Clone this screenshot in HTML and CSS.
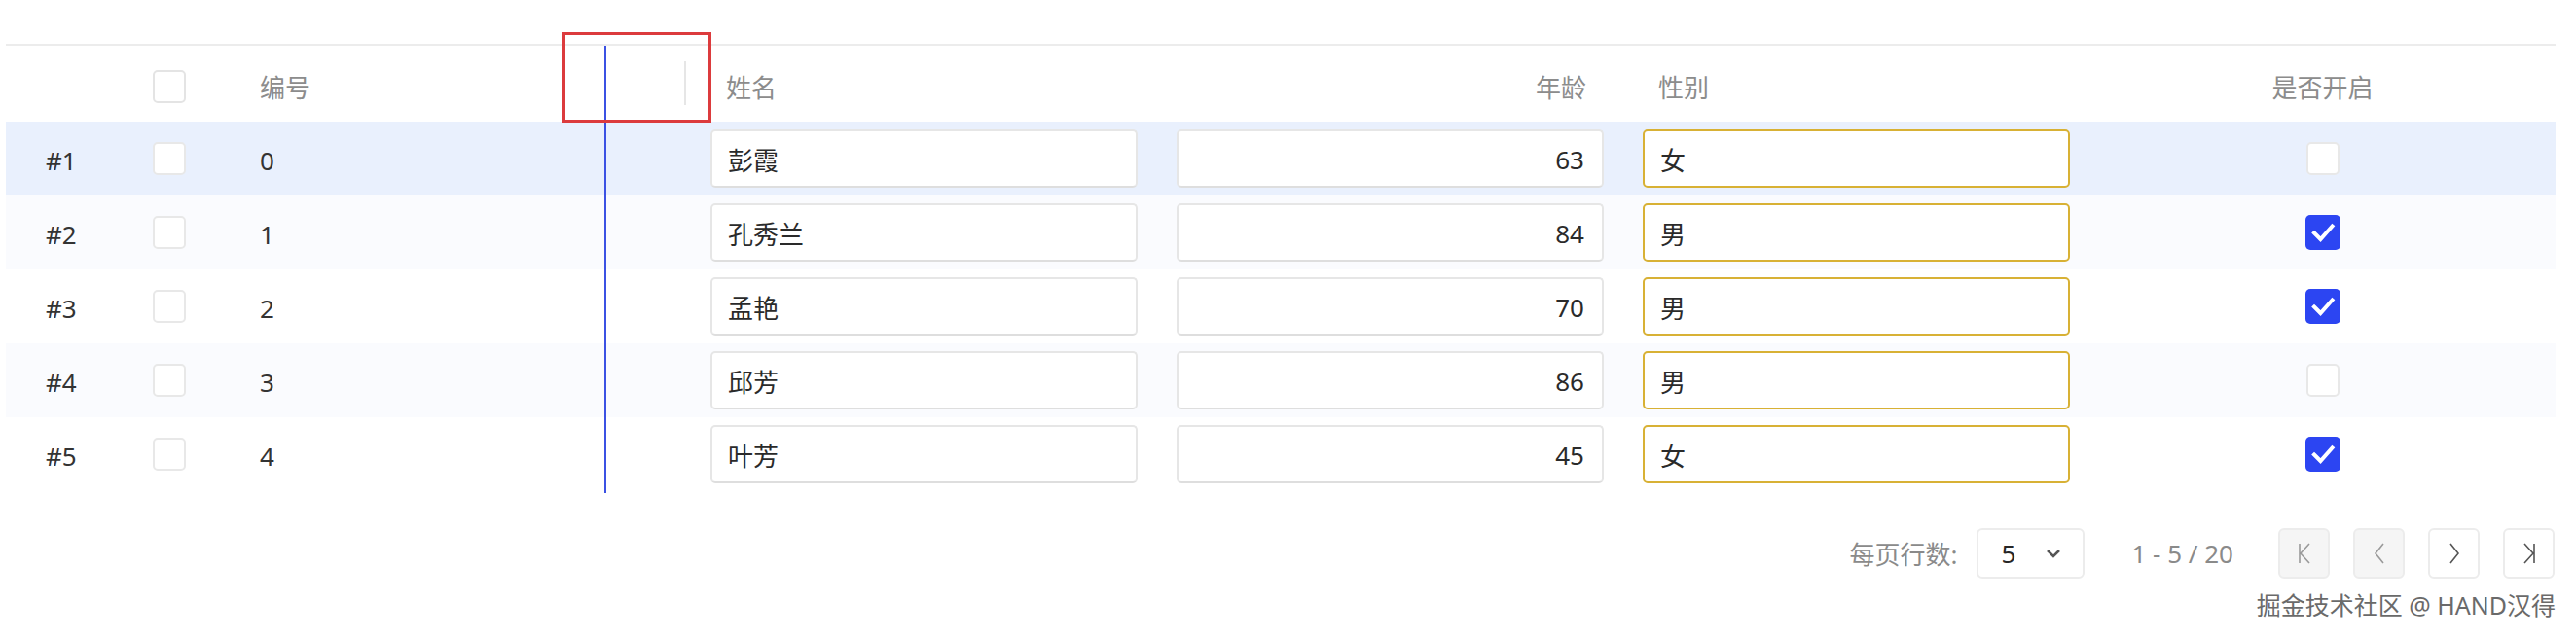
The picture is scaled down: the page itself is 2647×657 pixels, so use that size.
FILE: index.html
```html
<!DOCTYPE html>
<html lang="zh-CN">
<head>
<meta charset="utf-8">
<title>Table</title>
<link rel="stylesheet" href="styles.css">
</head>
<body>
<div class="page">
  <div class="table">
    <div class="row head">
      <div class="cell c-idx"></div>
      <div class="cell c-chk"><span class="cb"></span></div>
      <div class="cell c-code">编号<span class="divider"></span></div>
      <div class="cell c-name">姓名</div>
      <div class="cell c-age">年龄</div>
      <div class="cell c-sex">性别</div>
      <div class="cell c-on">是否开启</div>
    </div>

    <div class="row current">
      <div class="cell c-idx">#1</div>
      <div class="cell c-chk"><span class="cb"></span></div>
      <div class="cell c-code">0</div>
      <div class="cell c-name"><div class="field">彭霞</div></div>
      <div class="cell c-age"><div class="field num">63</div></div>
      <div class="cell c-sex"><div class="field req">女</div></div>
      <div class="cell c-on"><span class="cb"></span></div>
    </div>

    <div class="row stripe">
      <div class="cell c-idx">#2</div>
      <div class="cell c-chk"><span class="cb"></span></div>
      <div class="cell c-code">1</div>
      <div class="cell c-name"><div class="field">孔秀兰</div></div>
      <div class="cell c-age"><div class="field num">84</div></div>
      <div class="cell c-sex"><div class="field req">男</div></div>
      <div class="cell c-on"><span class="cb on"><svg viewBox="0 0 36 36"><path d="M9 18.5 L15.5 25 L27.5 11.5"/></svg></span></div>
    </div>

    <div class="row">
      <div class="cell c-idx">#3</div>
      <div class="cell c-chk"><span class="cb"></span></div>
      <div class="cell c-code">2</div>
      <div class="cell c-name"><div class="field">孟艳</div></div>
      <div class="cell c-age"><div class="field num">70</div></div>
      <div class="cell c-sex"><div class="field req">男</div></div>
      <div class="cell c-on"><span class="cb on"><svg viewBox="0 0 36 36"><path d="M9 18.5 L15.5 25 L27.5 11.5"/></svg></span></div>
    </div>

    <div class="row stripe">
      <div class="cell c-idx">#4</div>
      <div class="cell c-chk"><span class="cb"></span></div>
      <div class="cell c-code">3</div>
      <div class="cell c-name"><div class="field">邱芳</div></div>
      <div class="cell c-age"><div class="field num">86</div></div>
      <div class="cell c-sex"><div class="field req">男</div></div>
      <div class="cell c-on"><span class="cb"></span></div>
    </div>

    <div class="row">
      <div class="cell c-idx">#5</div>
      <div class="cell c-chk"><span class="cb"></span></div>
      <div class="cell c-code">4</div>
      <div class="cell c-name"><div class="field">叶芳</div></div>
      <div class="cell c-age"><div class="field num">45</div></div>
      <div class="cell c-sex"><div class="field req">女</div></div>
      <div class="cell c-on"><span class="cb on"><svg viewBox="0 0 36 36"><path d="M9 18.5 L15.5 25 L27.5 11.5"/></svg></span></div>
    </div>

    <div class="resize-line"></div>
    <div class="annot"></div>
  </div>

  <div class="pager">
    <span class="pager-label">每页行数:</span>
    <div class="select">
      <span>5</span>
      <svg class="chev" viewBox="0 0 16 10"><path d="M2 2 L8 8 L14 2"/></svg>
    </div>
    <span class="pager-info">1 - 5 / 20</span>
    <div class="pbtns">
      <span class="pbtn disabled"><svg viewBox="0 0 14 24"><path d="M2 2 V22 M12 2 L3 12 L12 22"/></svg></span>
      <span class="pbtn disabled"><svg viewBox="0 0 14 24"><path d="M11 2 L3 12 L11 22"/></svg></span>
      <span class="pbtn"><svg viewBox="0 0 14 24"><path d="M3 2 L11 12 L3 22"/></svg></span>
      <span class="pbtn"><svg viewBox="0 0 14 24"><path d="M2 2 L11 12 L2 22 M12 2 V22"/></svg></span>
    </div>
  </div>
  <div class="watermark">掘金技术社区 @ HAND汉得</div>
</div>
</body>
</html>
```

FILE: styles.css
```css
html, body {
  margin: 0;
  padding: 0;
  background: #ffffff;
  overflow: hidden;
}

.page {
  padding: 45px 0 0 6px;
  font-family: "Noto Sans", "Noto Sans CJK SC", sans-serif;
  font-size: 26px;
  color: #333333;
  width: 2620px;
}

.table {
  position: relative;
  border-top: 2px solid #ececec;
}

.row {
  display: grid;
  grid-template-columns: 118px 100px 486px repeat(4, 479px);
  height: 76px;
}

.row.head {
  height: 78px;
  color: #8c8c8c;
}

.row.current {
  background: #e9f0fd;
}

.row.stripe {
  background: #fafbfe;
}

.cell {
  display: flex;
  align-items: center;
  box-sizing: border-box;
  position: relative;
}

.head .cell {
  padding-top: 6px;
}

.c-idx {
  padding-left: 41px;
  padding-top: 4px;
}

.c-chk {
  padding-left: 33px;
}

.c-code {
  padding-left: 43px;
  padding-top: 4px;
}

.c-name, .c-age, .c-sex {
  padding: 0 20px;
}

.head .c-name, .head .c-sex {
  padding-left: 36px;
}

.head .c-age {
  justify-content: flex-end;
  padding-right: 38px;
}

.c-on {
  justify-content: center;
}

.divider {
  position: absolute;
  right: 5px;
  top: 16px;
  width: 2px;
  height: 45px;
  background: #e6e6e6;
}

.cb {
  display: block;
  width: 34px;
  height: 34px;
  box-sizing: border-box;
  border: 2px solid #e8e8e8;
  border-radius: 5px;
  background: #ffffff;
}

.head .cb {
  border-color: #e4e4e4;
}

.cb.on {
  width: 36px;
  height: 36px;
  border: none;
  background: #2c45f2;
}

.cb svg {
  display: block;
  width: 36px;
  height: 36px;
}

.cb svg path {
  fill: none;
  stroke: #ffffff;
  stroke-width: 4;
  stroke-linecap: square;
}

.field {
  flex: 1;
  height: 60px;
  box-sizing: border-box;
  border: 2px solid #e6e6e6;
  border-bottom-color: #dedede;
  border-radius: 5px;
  background: #ffffff;
  display: flex;
  align-items: center;
  padding: 2px 18px 0 16px;
  color: #2a2a2a;
}

.field.num {
  justify-content: flex-end;
}

.field.req {
  border-color: #d8b135;
}

.resize-line {
  position: absolute;
  left: 615px;
  top: 0;
  width: 2px;
  height: 460px;
  background: #3b51e3;
}

.annot {
  position: absolute;
  left: 572px;
  top: -14px;
  width: 153px;
  height: 93px;
  box-sizing: border-box;
  border: 3px solid #dc3b3d;
}

.pager {
  display: flex;
  align-items: center;
  justify-content: flex-end;
  margin-top: 38px;
  padding-right: 1px;
  height: 52px;
}

.pager-label {
  color: #8a8a8a;
  margin-right: 20px;
}

.select {
  width: 111px;
  height: 52px;
  box-sizing: border-box;
  border: 2px solid #ececec;
  border-radius: 6px;
  display: flex;
  align-items: center;
  justify-content: space-between;
  padding: 0 22px 0 23px;
  color: #262626;
}

.chev {
  width: 16px;
  height: 10px;
}

.chev path {
  fill: none;
  stroke: #555555;
  stroke-width: 2.5;
}

.pager-info {
  color: #8a8a8a;
  margin-left: 48px;
  margin-right: 46px;
}

.pbtns {
  display: flex;
  gap: 24px;
}

.pbtn {
  width: 53px;
  height: 52px;
  box-sizing: border-box;
  border: 2px solid #ececec;
  border-radius: 6px;
  display: flex;
  align-items: center;
  justify-content: center;
  background: #ffffff;
}

.pbtn.disabled {
  background: #f5f5f5;
}

.pbtn svg {
  width: 14px;
  height: 24px;
}

.pbtn svg path {
  fill: none;
  stroke: #555555;
  stroke-width: 1.6;
}

.pbtn.disabled svg path {
  stroke: #9a9a9a;
}

.watermark {
  text-align: right;
  margin-top: 12px;
  font-size: 25px;
  line-height: 30px;
  color: #6a6a6a;
  text-shadow: 0 0 2px #ffffff, 1px 1px 0 #ffffff;
}
```
